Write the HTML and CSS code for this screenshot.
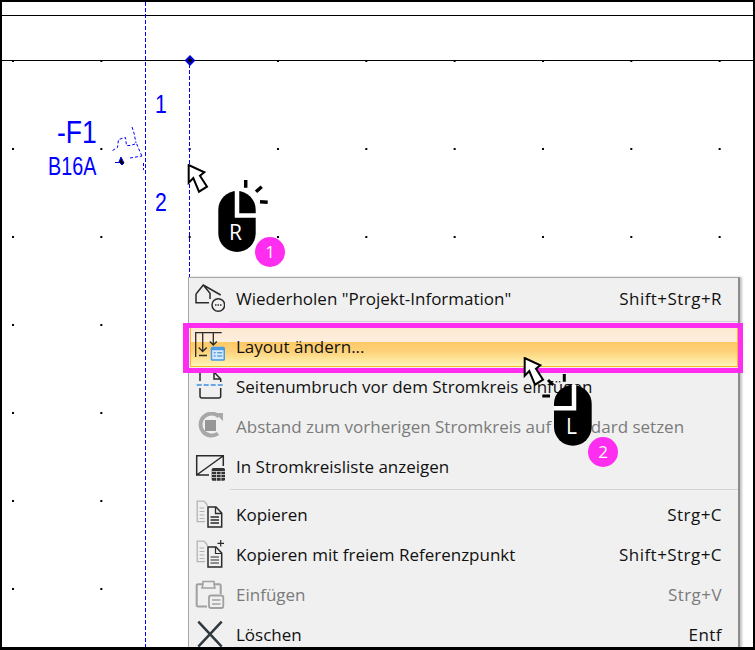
FILE: index.html
```html
<!DOCTYPE html>
<html lang="de">
<head>
<meta charset="utf-8">
<title>Layout ändern</title>
<link rel="stylesheet" href="styles.css">
</head>
<body>
<main class="canvas">
  <svg class="drawing" width="755" height="650" viewBox="0 0 755 650">
    <defs>
      <pattern id="dots" x="12" y="60" width="88.33" height="88" patternUnits="userSpaceOnUse">
        <rect width="2" height="2" fill="#000"/>
      </pattern>
    </defs>
    <rect width="755" height="650" fill="url(#dots)"/>
    <path d="M0 15.500H755M0 60.500H755" stroke="#000" fill="none"/>
    <path d="M145.500 2V650M189.500 64V277" stroke="#0000ff" stroke-dasharray="4 2" fill="none"/>
    <path d="M186 60.500l4-4 4 4-4 4z" fill="#000" stroke="#0000e0" stroke-width="2"/>
    <path d="M112.500 150.500l5-3 1-8 7-2 1 8 4 0 6-2 4 9.500 2 4M132 127l2 6 2 10M130 158l12-2M143.500 163v7" stroke="#0000ff" stroke-dasharray="3 2" fill="none"/>
    <path d="M115 162.500h4M121 157l3 6-2 2-3-3z" stroke="#0000e0" fill="#000"/>
  </svg>

  <span class="sym sym-f">-F1</span>
  <span class="sym sym-b">B16A</span>
  <span class="sym sym-n sym-1">1</span>
  <span class="sym sym-n sym-2">2</span>

  <svg class="pointer pointer-a" width="24" height="32" viewBox="0 0 24 32">
    <path d="M1.700 1V18.700L6.300 14 12 27.700 20 22.700 13 11.700 17.300 8.300z" fill="#fff" stroke="#000" stroke-width="2"/>
  </svg>

  <div class="mouse mouse-r">
    <svg width="52" height="74" viewBox="0 0 52 74">
      <rect x="1.300" y="12" width="37.400" height="61" rx="18.700" fill="#000"/>
      <path d="M20 12V36.500H39" stroke="#fff" stroke-width="4.500" fill="none"/>
      <path d="M28.700 1v7.700M44.700 7.700l-5.700 5M43 22.700l7.700.6" stroke="#000" stroke-width="3.500" fill="none"/>
    </svg>
    <span class="mouse-key mouse-key-r">R</span>
  </div>
  <span class="badge badge-1">1</span>

  <nav class="menu">
    <div class="row">
      <svg class="ico" viewBox="0 0 30 30"><path d="M1 10V18.700H14M1 10L8.300 1 25.700 11M8.300 1L15 9.300V15" fill="none" stroke="#2a2a2a" stroke-width="1.500"/><circle cx="23.300" cy="21" r="6.300" fill="#f0f0f0" stroke="#2a2a2a" stroke-width="1.500"/><path d="M20 21h1.500m1 0h1.500m1 0h1.500" stroke="#2a2a2a" stroke-width="1.500"/></svg>
      <span class="label">Wiederholen "Projekt-Information"</span>
      <span class="key">Shift+Strg+R</span>
    </div>
    <div class="sep"></div>
    <div class="row row-active">
      <svg class="ico" viewBox="0 0 30 30"><path d="M.7 25V.5H26.700M7.700.5V19M3.700 15.500l4 4 4-4M4 23.500h8M18.300.5V13M14.800 9.500l3.500 3.500 3.500-3.500" fill="none" stroke="#2a2a2a" stroke-width="1.300"/><rect x="15.700" y="14.700" width="14.300" height="14" rx="1.500" fill="#4a9be8"/><rect x="17.200" y="18.200" width="11.300" height="9" fill="#d4e9fb"/><path d="M18.700 20.800h2m1.500 0h5M18.700 24h2m1.500 0h5" stroke="#2a7bd0"/></svg>
      <span class="label">Layout ändern...</span>
    </div>
    <div class="row">
      <svg class="ico" viewBox="0 0 30 30"><path d="M5 9V0H19l6.700 7V10M5 16V24a2 2 0 0 0 2 2H23.700a2 2 0 0 0 2-2V16M19 0V7H25.700" fill="none" stroke="#2a2a2a" stroke-width="1.500"/><path d="M1.700 13H28.300" stroke="#3b8ee0" stroke-width="1.500" stroke-dasharray="5 2"/></svg>
      <span class="label">Seitenumbruch vor dem Stromkreis einfügen</span>
    </div>
    <div class="row row-off">
      <svg class="ico" viewBox="0 0 30 30"><path d="M24 4.500A11 11 0 1 0 23 21.500" fill="none" stroke="#a8a8a8" stroke-width="4"/><path d="M20 1h8v8z" fill="#a8a8a8"/><rect x="10" y="8" width="11" height="11" fill="#969696"/></svg>
      <span class="label">Abstand zum vorherigen Stromkreis auf Standard setzen</span>
    </div>
    <div class="row">
      <svg class="ico" viewBox="0 0 30 30"><path d="M14 23H1.700V3.700H28.300V14M1.700 23L28 4" fill="none" stroke="#2a2a2a" stroke-width="1.500"/><rect x="16.700" y="16" width="13.300" height="12.700" rx="1.500" fill="#333"/><path d="M17 19.500H30M17 22.500H30M17 25.500H30M21.500 19V29M26 19V29" stroke="#ddd" stroke-width=".8"/></svg>
      <span class="label">In Stromkreisliste anzeigen</span>
    </div>
    <div class="sep"></div>
    <div class="row">
      <svg class="ico" viewBox="0 0 30 30"><path d="M10 21.700H2.200V1.200H9l3 3V6" fill="none" stroke="#b4b4b4" stroke-width="1.300"/><path d="M4.500 8h5M4.500 11.500h5M4.500 15h5M4.500 18.500h5" stroke="#b4b4b4"/><path d="M13 7H21l5.700 6V27H13z" fill="#f0f0f0" stroke="#2a2a2a" stroke-width="1.500"/><path d="M20.500 7V13.500H26.700M15.500 17h8.500M15.500 20h8.500M15.500 23h8.500" fill="none" stroke="#2a2a2a" stroke-width="1.300"/></svg>
      <span class="label">Kopieren</span>
      <span class="key">Strg+C</span>
    </div>
    <div class="row">
      <svg class="ico" viewBox="0 0 30 30"><path d="M10 21.700H2.200V1.200H9l3 3V6" fill="none" stroke="#b4b4b4" stroke-width="1.300"/><path d="M4.500 8h5M4.500 11.500h5M4.500 15h5M4.500 18.500h5" stroke="#b4b4b4"/><path d="M13 7H21l5.700 6V27H13z" fill="#f0f0f0" stroke="#2a2a2a" stroke-width="1.500"/><path d="M20.500 7V13.500H26.700M15.500 17h8.500M15.500 20h8.500M15.500 23h8.500M25.700 0v6.500M22.500 3.300H29" fill="none" stroke="#2a2a2a" stroke-width="1.200"/></svg>
      <span class="label">Kopieren mit freiem Referenzpunkt</span>
      <span class="key">Shift+Strg+C</span>
    </div>
    <div class="row row-off">
      <svg class="ico" viewBox="0 0 30 30"><path d="M12 26.500H3a1.300 1.300 0 0 1-1.300-1.300V5.500A1.300 1.300 0 0 1 3 4.200H24.400a1.300 1.300 0 0 1 1.300 1.300V14" fill="none" stroke="#a0a0a0" stroke-width="2"/><path d="M8 4.500V1.500H19V4.500L20 8H7z" fill="#f0f0f0" stroke="#a0a0a0" stroke-width="1.500"/><rect x="14" y="15.500" width="14.300" height="12.500" rx="2" fill="#f0f0f0" stroke="#a0a0a0" stroke-width="1.800"/><path d="M17 20h8.500M17 24h8.500" stroke="#a0a0a0" stroke-width="1.500"/></svg>
      <span class="label">Einfügen</span>
      <span class="key">Strg+V</span>
    </div>
    <div class="row">
      <svg class="ico" viewBox="0 0 30 30"><path d="M3.300 1.700L26.700 26.700M26.700 1.700L3.300 26.700" fill="none" stroke="#2f3a40" stroke-width="2.500"/></svg>
      <span class="label">Löschen</span>
      <span class="key">Entf</span>
    </div>
  </nav>

  <div class="callout"></div>

  <div class="mouse mouse-l">
    <svg width="52" height="74" viewBox="0 0 52 74">
      <rect x="13" y="11" width="37.700" height="60.700" rx="18.800" fill="#000"/>
      <path d="M33 11V34.300H13" stroke="#fff" stroke-width="4.500" fill="none"/>
      <path d="M23.300 0v7.700M7 6l5.300 5M1.300 22H9" stroke="#000" stroke-width="3" fill="none"/>
    </svg>
    <span class="mouse-key mouse-key-l">L</span>
  </div>
  <svg class="pointer pointer-b" width="24" height="32" viewBox="0 0 24 32">
    <path d="M1.700 1V18.700L6.300 14 12 27.700 20 22.700 13 11.700 17.300 8.300z" fill="#fff" stroke="#000" stroke-width="2"/>
  </svg>
  <span class="badge badge-2">2</span>
</main>
</body>
</html>
```

FILE: styles.css
```css
* { box-sizing: border-box; }
html, body { margin: 0; padding: 0; background: #fff; }
.canvas {
  position: relative;
  width: 755px;
  height: 650px;
  overflow: hidden;
  background: #fff;
  font-family: "Open Sans", "Noto Sans", sans-serif;
}
.canvas::after {
  content: "";
  position: absolute;
  inset: 0;
  border: 2px solid #000;
  border-bottom-width: 3px;
  pointer-events: none;
}
.drawing { position: absolute; left: 0; top: 0; }
.sym {
  position: absolute;
  color: #0000ff;
  font-family: "Liberation Sans", Arial, sans-serif;
  line-height: 1;
  white-space: nowrap;
  transform-origin: left center;
}
.sym-f { left: 57px; top: 116px; font-size: 32px; transform: scaleX(.83); }
.sym-b { left: 48px; top: 154px; font-size: 25px; transform: scaleX(.79); }
.sym-n { font-size: 25px; transform: scaleX(.85); }
.sym-1 { left: 155px; top: 92px; }
.sym-2 { left: 155px; top: 190px; }
.pointer { position: absolute; }
.pointer-a { left: 187px; top: 164px; }
.pointer-b { left: 523px; top: 357px; }
.mouse { position: absolute; width: 52px; height: 74px; }
.mouse svg { display: block; }
.mouse-r { left: 217px; top: 179px; }
.mouse-l { left: 541px; top: 374px; }
.mouse-key {
  position: absolute;
  color: #fff;
  font-size: 21px;
  line-height: 26px;
}
.mouse-key-r { left: 12px; top: 40px; }
.mouse-key-l { left: 25px; top: 39px; }
.badge {
  position: absolute;
  width: 30px;
  height: 30px;
  border-radius: 50%;
  background: #ff2df0;
  color: #fff;
  font-size: 17px;
  line-height: 30px;
  text-align: center;
}
.badge-1 { left: 255px; top: 237px; }
.badge-2 { left: 588px; top: 437px; }
.menu {
  position: absolute;
  left: 188px;
  top: 277px;
  width: 552px;
  height: 380px;
  padding: 1px 0 0 1px;
  background: #f0f0f0;
  border: 1px solid #a8a8a8;
  border-right: 2px solid #8c8c8c;
  box-shadow: 2px 0 2px #c4c4c4;
}
.row {
  display: flex;
  align-items: center;
  height: 40px;
  padding-right: 16px;
  color: #111;
  font-size: 17px;
  white-space: nowrap;
}
.ico { width: 30px; height: 30px; margin: 0 11px 0 5px; flex: none; }
.label, .key { position: relative; top: -1px; }
.label { flex: 1; }
.key { flex: none; letter-spacing: .45px; }
.row-off { color: #7b7b7b; }
.row-active {
  border: 1px solid #f5b52e;
  background: linear-gradient(#fde8d2 0, #fdeedd 36%, #fec965 37%, #fdd27a 62%, #fff6b8 100%);
}
.row-active .ico { margin-left: 4px; }
.sep { height: 8px; margin-left: 40px; position: relative; }
.sep::before {
  content: "";
  position: absolute;
  left: 0;
  right: 0;
  top: 2px;
  height: 1px;
  background: #d4d4d4;
}
.callout {
  position: absolute;
  left: 183px;
  top: 323px;
  width: 560px;
  height: 50px;
  border: 5px solid #ff2df0;
  border-left-width: 6px;
}
```
